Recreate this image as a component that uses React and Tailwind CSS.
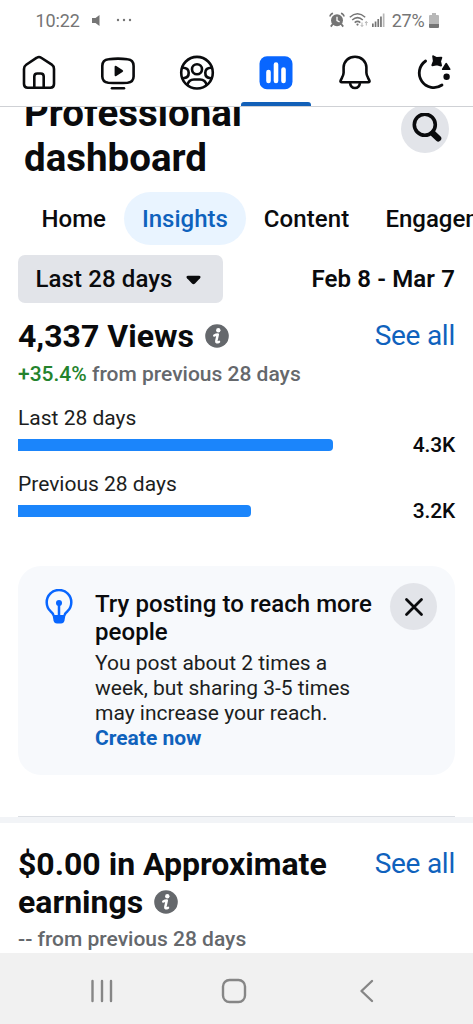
const TABS = [
  { label: "Home", className: "ml-[23.5px] px-[18px]" },
  { label: "Insights", className: "rounded-full bg-[#e9f4ff] px-[18px] text-[#0f62bd]" },
  { label: "Content", className: "px-[18px] tracking-[0.1px]" },
  { label: "Engagement", className: "px-[18px]" },
];

const VIEWS = [
  { label: "Last 28 days", value: "4.3K", width: 315 },
  { label: "Previous 28 days", value: "3.2K", width: 232.5 },
];

export default function App() {
  return (
    <div className="flex h-[1024px] w-[473px] flex-col overflow-hidden bg-white font-['Roboto',sans-serif] text-[#0a0b0d]">
      <StatusBar />
      <NavTabs />
      <main className="min-h-0 flex-1 overflow-hidden">
        <TitleRow />
        <SectionTabs />
        <div className="mt-[10px] flex h-[48px] items-center justify-between px-[18px]">
          <button className="flex h-[48px] w-[205px] items-center rounded-[7px] bg-[#e2e4e9] pl-[17.5px] text-[24px] font-medium tracking-[0.1px] whitespace-nowrap">
            Last 28 days
            <svg className="mt-[2px] ml-[13px]" width="15" height="10" viewBox="0 0 15 10">
              <path d="M2 .8h11c1.500 0 2 1.400 1 2.500L9 8.400c-1 1-2 1-3 0L1 3.300C0 2.200.5.8 2 .8z" fill="currentColor" />
            </svg>
          </button>
          <span className="text-[24px] font-semibold tracking-[0.12px] whitespace-nowrap">Feb 8 - Mar 7</span>
        </div>
        <ViewsSection />
        <TipCard />
        <div className="mx-[18px] mt-[41.500px] h-px bg-[#dcdfe4]" />
        <div className="h-[6px] bg-[#f2f4f7]" />
        <EarningsSection />
      </main>
      <SystemNav />
    </div>
  );
}

function StatusBar() {
  return (
    <div className="flex h-[40px] shrink-0 items-center justify-between pr-[34.5px] pl-[35.5px] text-[18px] text-[#757575]">
      <div className="flex items-center">
        <span className="tracking-[-0.1px]">10:22</span>
        <svg className="ml-[12px]" width="9" height="13" viewBox="0 0 9 13">
          <path d="M0 4h3.500L7.500 1v11L3.500 9H0z" fill="currentColor" />
        </svg>
        <svg className="ml-[15px]" width="17" height="4" viewBox="0 0 17 4" fill="currentColor">
          <circle cx="2" cy="2" r="1.200" />
          <circle cx="8" cy="2" r="1.200" />
          <circle cx="14" cy="2" r="1.200" />
        </svg>
      </div>
      <div className="flex items-center">
        {/* alarm */}
        <svg width="16" height="16" viewBox="0 0 16 16">
          <path d="M1 4.500Q1.300 2 4 1.200M12 1.200Q14.700 2 15 4.500" fill="none" stroke="currentColor" strokeWidth="1.600" />
          <path d="M3.800 12l-2 2.600M12.200 12l2 2.600" stroke="currentColor" strokeWidth="1.800" />
          <circle cx="8" cy="8.300" r="6" fill="currentColor" />
          <path d="M8 4.800v3.700l2.600 1.300" fill="none" stroke="#fff" strokeWidth="1.300" />
        </svg>
        {/* wifi */}
        <svg className="ml-[4px]" width="20" height="16" viewBox="0 0 20 16" fill="none" stroke="currentColor" strokeWidth="1.500">
          <path d="M.8 5.200Q8.500-1.600 16.200 5.200M3.200 8Q8.500 3.200 13.800 8M5.700 10.600Q8.500 8.200 11.300 10.600" />
          <circle cx="8.500" cy="12.600" r="1.100" fill="currentColor" stroke="none" />
          <path d="M13 10.500v4M11.700 13l1.300 1.500 1.300-1.500M17.300 13.500v-4M16 11l1.300-1.500 1.300 1.500" stroke="#b5b5b5" strokeWidth="1" />
        </svg>
        {/* signal */}
        <svg className="ml-[3px]" width="13" height="14" viewBox="0 0 13 14" fill="currentColor">
          <path d="M0 10.500h1.700V14H0zM2.700 8.500h1.700V14H2.700zM5.400 6h1.700v8H5.400zM8.100 3.500h1.700V14H8.100z" />
          <path d="M10.800.5h1.700V14h-1.700z" fill="#b8b8b8" />
        </svg>
        <span className="ml-[6.500px] tracking-[-0.2px]">27%</span>
        <svg className="ml-[4px]" width="10" height="15" viewBox="0 0 10 15">
          <path d="M3 0h4v2h2q1 0 1 1v8H0V3q0-1 1-1h2z" fill="#b8b8b8" />
          <path d="M0 11h10v3q0 1-1 1H1q-1 0-1-1z" fill="currentColor" />
        </svg>
      </div>
    </div>
  );
}

function NavTabs() {
  return (
    <nav className="relative grid h-[67px] shrink-0 grid-cols-6 justify-items-center border-b border-[#cfd1d5] pt-[14px]">
      {/* home */}
      <svg width="36" height="36" viewBox="0 0 36 36" fill="none" stroke="currentColor" strokeWidth="2.600" strokeLinejoin="round">
        <path d="M15.800 3.700Q18 2.200 20.200 3.700L30.800 10.700Q33 12.200 33 15v15q0 3.700-3.700 3.700H6.700Q3 33.700 3 30V15q0-2.800 2.200-4.300z" />
        <path d="M13.300 33.500V22.500q0-3 3-3h3.400q3 0 3 3v11" />
      </svg>
      {/* video */}
      <svg width="36" height="36" viewBox="0 0 36 36" fill="none" stroke="currentColor" strokeWidth="2.600" strokeLinecap="round">
        <path d="M8.500 5.200Q18 4 27.500 5.200Q33.500 5.500 33.600 12v10.500q-.1 5.500-6 6.200Q18 29.400 8.300 28.700q-5.900-.7-6-6.200V12Q2.500 5.500 8.500 5.200z" />
        <path d="M12 34.200h12" />
        <path d="M14.600 13.100v7.800q0 1.900 1.700 1l6.200-3.900q1.500-1 0-2l-6.200-3.900q-1.700-.9-1.700 1z" fill="currentColor" stroke="none" />
      </svg>
      {/* groups */}
      <svg width="36" height="36" viewBox="0 0 36 36" fill="none" stroke="currentColor" strokeWidth="2.600">
        <circle cx="18" cy="18.700" r="15.800" />
        <circle cx="18" cy="15.300" r="5" />
        <path d="M8.300 31.400Q9.500 25.500 15 25.500h6q5.500 0 6.700 5.900" />
        <path d="M3.500 13.700Q9.500 13.500 9.700 18.700T4 24.200M32.500 13.700Q26.500 13.500 26.300 18.700T32 24.200" />
      </svg>
      {/* insights */}
      <svg width="36" height="36" viewBox="0 0 36 36">
        <rect x="1.500" y="2.300" width="33" height="33" rx="7.500" fill="#0866ff" />
        <path d="M10.500 18v9M18 10.500v16.500M25.500 15.500V27" stroke="#fff" strokeWidth="4.600" strokeLinecap="round" />
      </svg>
      {/* notifications */}
      <svg width="36" height="36" viewBox="0 0 36 36" fill="none" stroke="currentColor" strokeWidth="2.600" strokeLinejoin="round">
        <path d="M18 2.800C11.500 2.800 7 7.200 6.600 13.200v5.500Q6.500 21 5 23.700L3.600 26.600Q3 28.300 4.800 28.300h26.400q1.800 0 1.200-1.700L31 23.700q-1.500-2.700-1.600-5V13.200C29 7.200 24.500 2.800 18 2.800z" />
        <path d="M13 29q.8 5 5 5t5-5" />
      </svg>
      {/* spark menu */}
      <svg width="36" height="36" viewBox="0 0 36 36" fill="none">
        <path d="M9.600 7A14 14 0 1 0 26 31" stroke="currentColor" strokeWidth="2.800" strokeLinecap="round" />
        <path d="M17.200 2.300l3.500 1.800 4.600-.4-1.300 3.600 1 4.300-4-1.300-4.600.9 1.500-4z" fill="currentColor" stroke="currentColor" strokeWidth="2" strokeLinejoin="round" />
        <path d="M30.200 9.800l3.400 5.400h-6.800z" fill="currentColor" stroke="currentColor" strokeWidth="1.800" strokeLinejoin="round" />
        <circle cx="30.600" cy="22.800" r="3.200" fill="currentColor" />
      </svg>
      <span className="absolute bottom-0 left-[241px] h-[4px] w-[70px] rounded-t-[3px] bg-[#1260b8]" />
    </nav>
  );
}

function TitleRow() {
  return (
    <div className="-mt-[17px] flex h-[90px] justify-between px-[24px]">
      <h1 className="w-[260px] text-[38.5px] leading-[45px] font-bold">Professional dashboard</h1>
      <button className="mt-[15px] flex h-[48px] w-[48px] items-center justify-center rounded-full bg-[#e2e4e9]">
        <svg className="ml-[3px]" width="32" height="32" viewBox="0 0 32 32" fill="none" stroke="currentColor" strokeLinecap="round">
          <circle cx="13.800" cy="11.700" r="10.500" strokeWidth="3.600" />
          <path d="M22 20.500l5.300 5" strokeWidth="6" />
        </svg>
      </button>
    </div>
  );
}

function SectionTabs() {
  return (
    <div className="mt-[12px] flex h-[53px] overflow-hidden text-[24px] font-medium">
      {TABS.map((tab) => (
        <div key={tab.label} className={`flex h-[53px] shrink-0 items-center pt-px ${tab.className}`}>
          {tab.label}
        </div>
      ))}
    </div>
  );
}

function InfoIcon({ className }) {
  return (
    <svg className={className} width="24" height="24" viewBox="0 0 24 24">
      <circle cx="12" cy="12" r="11.800" fill="#65686c" />
      <circle cx="13.300" cy="6.300" r="2.200" fill="#fff" />
      <path d="M9.300 11.500Q11 10.500 12.800 10.500L11.300 17q-.4 2 2.700.8" fill="none" stroke="#fff" strokeWidth="2.500" strokeLinecap="round" strokeLinejoin="round" />
    </svg>
  );
}

function ViewsSection() {
  return (
    <section className="px-[18px] pt-[14px]">
      <div className="flex h-[38px] items-center justify-between">
        <h2 className="flex items-center text-[32px] leading-[38px] font-bold whitespace-nowrap">
          4,337 Views
          <InfoIcon className="ml-[11.500px]" />
        </h2>
        <a className="text-[28px] leading-[38px] tracking-[-0.25px] text-[#0f62bd]">See all</a>
      </div>
      <p className="mt-[6px] text-[21px] leading-[26px] font-medium text-[#65686c]">
        <span className="text-[#24832c]">+35.4%</span> from previous 28 days
      </p>
      <div className="mt-[18px]">
        {VIEWS.map((row) => (
          <div key={row.label} className="h-[65.500px]">
            <div className="text-[21px] leading-[26px] text-[#1c1e21]">{row.label}</div>
            <div className="mt-px flex h-[26px] items-center justify-between">
              <div className="h-[12px] rounded-r-[4px] bg-[#1b85fb]" style={{ width: row.width }} />
              <span className="text-[21px] leading-[26px] font-medium tracking-[-0.2px]">{row.value}</span>
            </div>
          </div>
        ))}
      </div>
    </section>
  );
}

function TipCard() {
  return (
    <section className="mx-[18px] mt-[30px] flex h-[208.500px] rounded-[23px] bg-[#f7f9fc]">
      <svg className="mt-[23px] ml-[27px] shrink-0" width="28" height="36" viewBox="0 0 28 36" fill="none" stroke="#0866ff">
        <path d="M8.500 26.500Q8.300 24.500 5.500 22.200A12.300 12.300 0 1 1 22.500 22.200Q19.700 24.500 19.500 26.500" strokeWidth="2.500" />
        <path d="M14 14v13" strokeWidth="2.500" />
        <circle cx="14" cy="14" r="3" fill="#0866ff" stroke="none" />
        <path d="M7.500 26h13l-1 5.500q-.6 3-3.500 3h-4q-2.900 0-3.500-3z" fill="#0866ff" stroke="none" />
      </svg>
      <div className="mt-[24px] ml-[22px] w-[295px] shrink-0">
        <h3 className="text-[24px] leading-[28px] font-medium tracking-[0.06px]">
          Try posting to reach more
          <br />
          people
        </h3>
        <p className="mt-[5px] text-[21px] leading-[25px] text-[#1c1e21]">
          You post about 2 times a
          <br />
          week, but sharing 3-5 times
          <br />
          may increase your reach.
        </p>
        <a className="block text-[21px] leading-[25px] font-bold text-[#0f62bd]">Create now</a>
      </div>
      <button className="mt-[17px] flex h-[47px] w-[47px] shrink-0 items-center justify-center rounded-full bg-[#e2e4e9]">
        <svg width="20" height="20" viewBox="0 0 20 20">
          <path d="M2.500 2.500l15 15M17.500 2.500l-15 15" stroke="currentColor" strokeWidth="2.800" strokeLinecap="round" />
        </svg>
      </button>
    </section>
  );
}

function EarningsSection() {
  return (
    <section className="px-[18px] pt-[22px]">
      <div className="flex justify-between">
        <h2 className="text-[32px] leading-[38px] font-bold whitespace-nowrap">
          $0.00 in Approximate
          <span className="flex items-center">
            earnings
            <InfoIcon className="ml-[11px]" />
          </span>
        </h2>
        <a className="text-[28px] leading-[38px] tracking-[-0.25px] whitespace-nowrap text-[#0f62bd]">See all</a>
      </div>
      <p className="mt-[5px] text-[21px] leading-[26px] font-medium text-[#65686c]">-- from previous 28 days</p>
    </section>
  );
}

function SystemNav() {
  return (
    <div className="flex h-[71px] shrink-0 items-center bg-[#f1f1f1] pt-[4px] pl-[90px] text-[#868686]">
      <svg width="24" height="24" viewBox="0 0 24 24" stroke="currentColor" strokeWidth="2.400" strokeLinecap="round">
        <path d="M2.500 2v20M12 2v20M21 2v20" />
      </svg>
      <svg className="ml-[107px]" width="26" height="26" viewBox="0 0 26 26">
        <rect x="2" y="2" width="22" height="22" rx="6.500" fill="none" stroke="currentColor" strokeWidth="2.400" />
      </svg>
      <svg className="ml-[111.500px]" width="16" height="24" viewBox="0 0 16 24" fill="none" stroke="currentColor" strokeWidth="2.400" strokeLinecap="round" strokeLinejoin="round">
        <path d="M13 2L2.500 12L13 22" />
      </svg>
    </div>
  );
}
